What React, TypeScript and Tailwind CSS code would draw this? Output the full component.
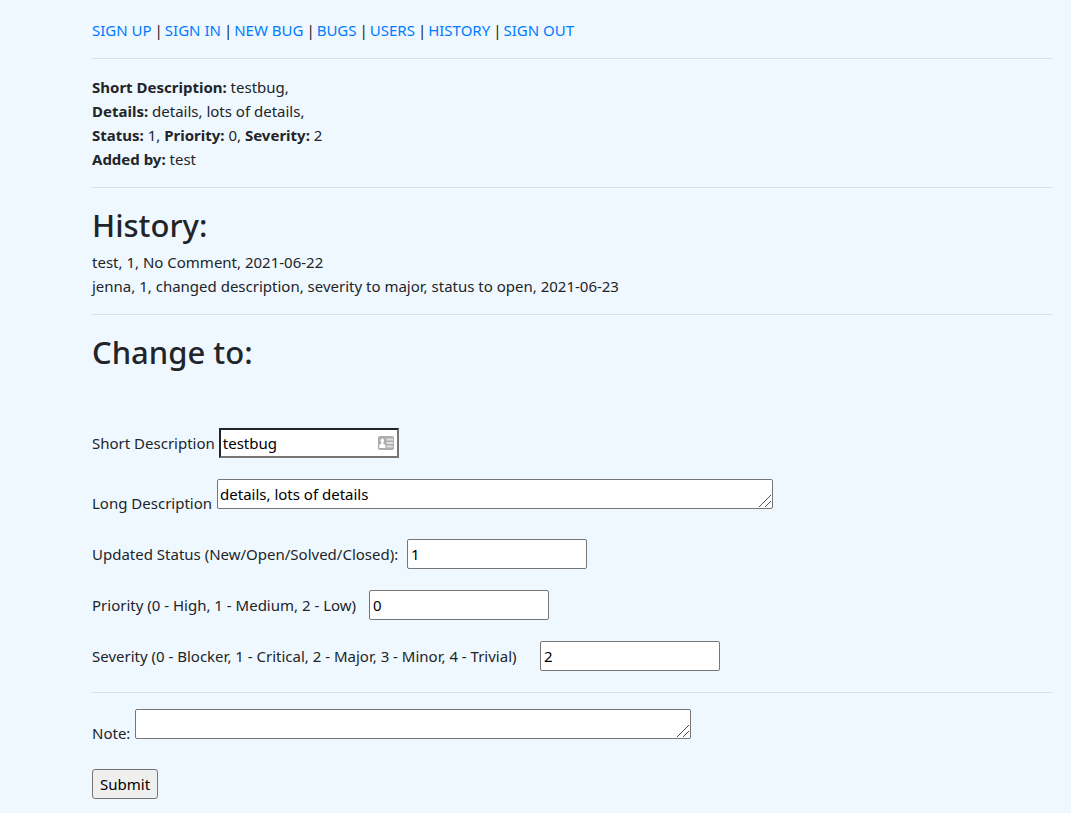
import type { ReactNode } from "react";

const links = ["SIGN UP", "SIGN IN", "NEW BUG", "BUGS", "USERS", "HISTORY", "SIGN OUT"];

const history = [
  "test, 1, No Comment, 2021-06-22",
  "jenna, 1, changed description, severity to major, status to open, 2021-06-23",
];

function Rule() {
  return <hr className="my-4 border-t border-[#d8dfe6]" />;
}

function Heading({ children }: { children: ReactNode }) {
  return <h2 className="mb-1.5 pt-0.5 text-[31px] leading-[38px] font-medium">{children}</h2>;
}

function CardIcon() {
  return (
    <svg
      className="pointer-events-none absolute top-2 right-[5px] h-[14px] w-4"
      viewBox="0 0 16 14"
      aria-hidden="true"
    >
      <rect x="0" y="0" width="16" height="14" rx="2" fill="#aeaeae" />
      <ellipse cx="4.3" cy="4.6" rx="1.7" ry="2.2" fill="#fff" />
      <path d="M3.300 6h2v1.800l2 1.200V12H1.300V9l2-1.200z" fill="#fff" />
      <path d="M8.500 2.500H15V4.500H8.500zM8.500 6H15V8H8.500zM8.500 9.500H15V11.500H8.500z" fill="#dedede" />
    </svg>
  );
}

type TextRowProps = { id: string; label: string; value: string; labelWidth: string };

function TextRow({ id, label, value, labelWidth }: TextRowProps) {
  return (
    <div className="mb-[21px] flex items-center gap-[5px]">
      <label htmlFor={id} className={labelWidth}>
        {label}
      </label>
      <input
        id={id}
        type="text"
        defaultValue={value}
        className="h-[30px] w-[180px] rounded-[2px] border border-[#767676] bg-white px-[3px] text-black"
      />
    </div>
  );
}

function AreaRow({ id, label, value }: { id: string; label: string; value: string }) {
  return (
    <div className="mb-6 flex items-start gap-[5px]">
      <label htmlFor={id} className="pt-3">
        {label}
      </label>
      <div className="relative">
        <textarea
          id={id}
          rows={1}
          defaultValue={value}
          className="block h-[30px] w-[556px] resize overflow-auto rounded-[2px] border border-[#767676] bg-white px-[2px] py-[2px] text-black [&::-webkit-resizer]:bg-transparent"
        />
        <svg
          className="pointer-events-none absolute right-[2px] bottom-[2px] size-3"
          viewBox="0 0 12 12"
          stroke="#555"
          strokeWidth="1"
          aria-hidden="true"
        >
          <path d="M0 12L12 0M6 12l6-6" />
        </svg>
      </div>
    </div>
  );
}

export default function App() {
  return (
    <div className="min-h-screen bg-[#f0f8ff] pt-[18px] pr-[19px] pb-[14px] pl-[92px] font-['Noto_Sans','Open_Sans',sans-serif] text-[15px] leading-6 text-[#212529]">
      <nav className="flex flex-wrap gap-[3px]">
        {links.map((link, i) => (
          <span key={link} className="flex gap-[2px]">
            {i > 0 && <span>|</span>}
            <a href="#" className="text-[#007bff]">
              {link}
            </a>
          </span>
        ))}
      </nav>
      <Rule />
      <section>
        <div>
          <b>Short Description:</b> testbug,
        </div>
        <div>
          <b>Details:</b> details, lots of details,
        </div>
        <div>
          <b>Status:</b> 1, <b>Priority:</b> 0, <b>Severity:</b> 2
        </div>
        <div>
          <b>Added by:</b> test
        </div>
      </section>
      <Rule />
      <section>
        <Heading>History:</Heading>
        {history.map((entry) => (
          <div key={entry}>{entry}</div>
        ))}
      </section>
      <Rule />
      <Heading>Change to:</Heading>
      <form className="pt-[51px]" onSubmit={(e) => e.preventDefault()}>
        <div className="mb-[21px] flex items-center gap-1">
          <label htmlFor="short">Short Description</label>
          <div className="relative">
            <input
              id="short"
              type="text"
              defaultValue="testbug"
              className="block h-[30px] w-[180px] border-2 border-t-[#212529] border-r-[#767676] border-b-[#767676] border-l-[#212529] bg-white px-[2px] text-black"
            />
            <CardIcon />
          </div>
        </div>
        <AreaRow id="long" label="Long Description" value="details, lots of details" />
        <TextRow
          id="status"
          label="Updated Status (New/Open/Solved/Closed):"
          value="1"
          labelWidth="min-w-[310px]"
        />
        <TextRow
          id="priority"
          label="Priority (0 - High, 1 - Medium, 2 - Low)"
          value="0"
          labelWidth="min-w-[272px]"
        />
        <TextRow
          id="severity"
          label="Severity (0 - Blocker, 1 - Critical, 2 - Major, 3 - Minor, 4 - Trivial)"
          value="2"
          labelWidth="min-w-[443px]"
        />
        <Rule />
        <AreaRow id="note" label="Note:" value="" />
        <button
          type="submit"
          className="h-[30px] rounded-[3px] border border-[#767676] bg-[#efefef] px-[7px] text-black"
        >
          Submit
        </button>
      </form>
    </div>
  );
}
